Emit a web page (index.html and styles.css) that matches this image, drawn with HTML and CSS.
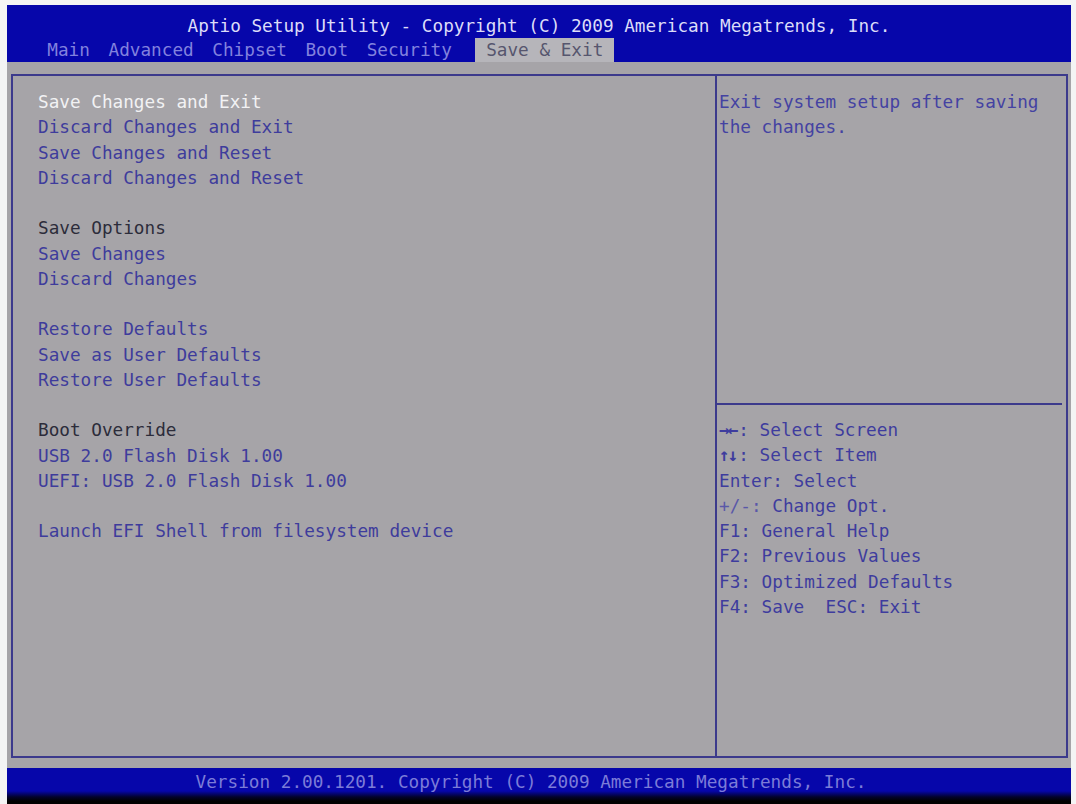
FILE: index.html
```html
<!DOCTYPE html>
<html>
<head>
<meta charset="utf-8">
<link rel="stylesheet" href="styles.css">
</head>
<body>
<div class="screen">
  <header class="header">
    <div class="title">Aptio Setup Utility - Copyright (C) 2009 American Megatrends, Inc.</div>
    <nav class="tabs">
      <span class="tab">Main</span>
      <span class="tab">Advanced</span>
      <span class="tab">Chipset</span>
      <span class="tab">Boot</span>
      <span class="tab">Security</span>
      <span class="tab tab-active">Save &amp; Exit</span>
    </nav>
  </header>
  <main class="body">
    <div class="frame">
      <section class="menu">
        <div class="line item selected">Save Changes and Exit</div>
        <div class="line item">Discard Changes and Exit</div>
        <div class="line item">Save Changes and Reset</div>
        <div class="line item">Discard Changes and Reset</div>
        <div class="line"></div>
        <div class="line label">Save Options</div>
        <div class="line item">Save Changes</div>
        <div class="line item">Discard Changes</div>
        <div class="line"></div>
        <div class="line item">Restore Defaults</div>
        <div class="line item">Save as User Defaults</div>
        <div class="line item">Restore User Defaults</div>
        <div class="line"></div>
        <div class="line label">Boot Override</div>
        <div class="line item">USB 2.0 Flash Disk 1.00</div>
        <div class="line item">UEFI: USB 2.0 Flash Disk 1.00</div>
        <div class="line"></div>
        <div class="line item">Launch EFI Shell from filesystem device</div>
      </section>
      <aside class="side">
        <div class="help">
          <div class="line">Exit system setup after saving</div>
          <div class="line">the changes.</div>
        </div>
        <div class="keys">
          <div class="line"><span class="arrows">→←</span>: Select Screen</div>
          <div class="line"><span class="arrows">↑↓</span>: Select Item</div>
          <div class="line">Enter: Select</div>
          <div class="line"><span class="key">+/-:</span> Change Opt.</div>
          <div class="line">F1: General Help</div>
          <div class="line">F2: Previous Values</div>
          <div class="line">F3: Optimized Defaults</div>
          <div class="line">F4: Save  ESC: Exit</div>
        </div>
      </aside>
    </div>
  </main>
  <footer class="footer">
    <div class="footer-text">Version 2.00.1201. Copyright (C) 2009 American Megatrends, Inc.</div>
  </footer>
</div>
</body>
</html>
```
FILE: styles.css
```css
html, body {
  margin: 0;
  padding: 0;
  background: #f4f4f4;
}
body {
  width: 1076px;
  height: 804px;
  overflow: hidden;
  font-family: "DejaVu Sans Mono", "Liberation Mono", monospace;
  font-size: 17.7px;
}
.screen {
  margin: 5px 0 0 7px;
  width: 1064px;
  display: flex;
  flex-direction: column;
}
.header {
  background: #0606aa;
  height: 57px;
  padding-top: 9px;
  box-sizing: border-box;
  display: flex;
  flex-direction: column;
}
.title {
  height: 24px;
  line-height: 24px;
  text-align: center;
  color: #dcdcf8;
  white-space: pre;
}
.tabs {
  display: flex;
  height: 24px;
  padding-left: 31px;
  align-items: stretch;
}
.tab {
  padding: 0 9.3px;
  line-height: 24px;
  color: #8282de;
  white-space: pre;
}
.tab-active {
  margin-left: 14px;
  padding: 0 11px;
  background: #b6b5ba;
  color: #56566e;
}
.body {
  background: #a6a4a8;
  height: 706px;
  box-sizing: border-box;
  padding: 12px 3px 10px 4px;
  display: flex;
}
.frame {
  flex: 1;
  border: 2px solid #3c3a8c;
  display: grid;
  grid-template-columns: 704px 1fr;
}
.menu {
  border-right: 2px solid #3c3a8c;
  padding: 14px 0 0 25px;
}
.line {
  height: 25.25px;
  line-height: 25.25px;
  white-space: pre;
}
.item {
  color: #3e3c9c;
}
.selected {
  color: #f2f2f4;
}
.label {
  color: #2c2c3a;
}
.side {
  display: flex;
  flex-direction: column;
}
.help {
  height: 329px;
  padding: 14px 0 0 2px;
  box-sizing: border-box;
  color: #4442a2;
  border-bottom: 2px solid #3c3a8c;
  margin-right: 4px;
}
.keys {
  padding: 13px 0 0 2px;
  color: #3e3c9e;
}
.arrows {
  font-weight: bold;
  letter-spacing: -2px;
  margin-right: 2px;
}
.key {
  color: #5a58a8;
}
.footer {
  height: 36px;
  background: linear-gradient(#0606aa 0, #0606aa 23px, #02022a 29px, #000 33px);
}
.footer-text {
  height: 28px;
  line-height: 28px;
  text-align: center;
  color: #7c7cd8;
  padding-right: 16px;
  white-space: pre;
}
```
